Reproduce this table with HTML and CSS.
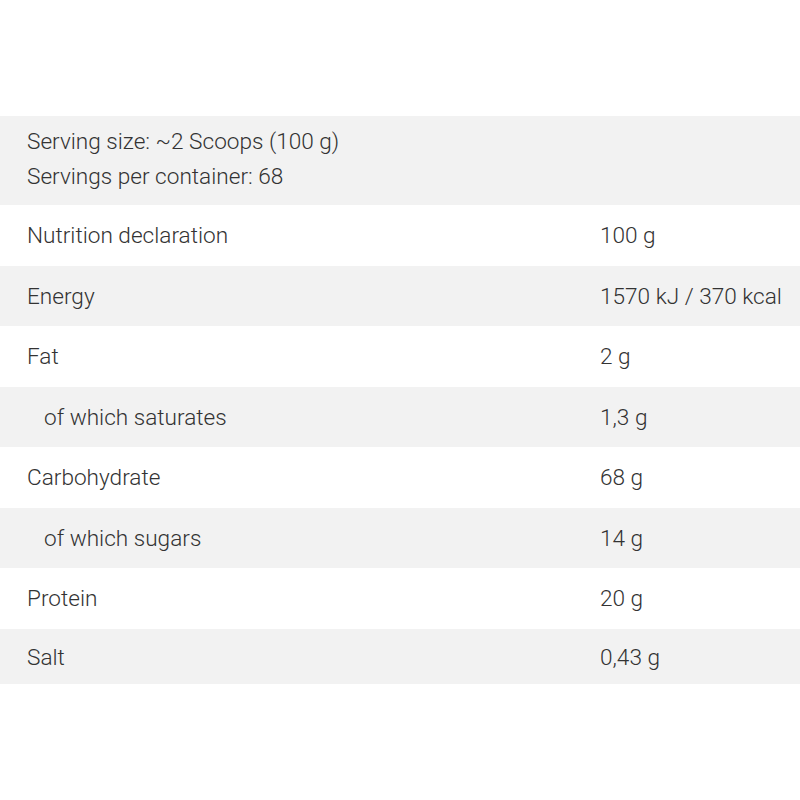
FILE: index.html
```html
<!DOCTYPE html>
<html>
<head>
<meta charset="utf-8">
<link rel="stylesheet" href="styles.css">
</head>
<body>
<div class="table">
  <div class="head">
    <div class="line">Serving size: ~2 Scoops (100 g)</div>
    <div class="line">Servings per container: 68</div>
  </div>
  <div class="row"><div class="name">Nutrition declaration</div><div class="val">100 g</div></div>
  <div class="row alt"><div class="name">Energy</div><div class="val">1570 kJ / 370 kcal</div></div>
  <div class="row"><div class="name">Fat</div><div class="val">2 g</div></div>
  <div class="row alt"><div class="name sub">of which saturates</div><div class="val">1,3 g</div></div>
  <div class="row"><div class="name">Carbohydrate</div><div class="val">68 g</div></div>
  <div class="row alt"><div class="name sub">of which sugars</div><div class="val">14 g</div></div>
  <div class="row"><div class="name">Protein</div><div class="val">20 g</div></div>
  <div class="row alt last"><div class="name">Salt</div><div class="val">0,43 g</div></div>
</div>
</body>
</html>
```
FILE: styles.css
```css
html, body {
  margin: 0;
  padding: 0;
  background: #ffffff;
}
body {
  font-family: Roboto, "Liberation Sans", sans-serif;
  font-size: 22.6px;
  font-weight: 300;
  color: #333333;
}
.table {
  margin-top: 116px;
  display: flex;
  flex-direction: column;
}
.head {
  background: #f2f2f2;
  padding: 8px 27px 11px;
  height: 89px;
  box-sizing: border-box;
}
.line {
  line-height: 35px;
}
.row {
  display: grid;
  grid-template-columns: 573px 1fr;
  height: 60.5px;
  align-items: center;
  padding-left: 27px;
  padding-top: 2px;
  box-sizing: border-box;
}
.row .name,
.row .val {
  line-height: 30px;
}
.alt {
  background: #f2f2f2;
}
.last {
  height: 55px;
  padding-top: 4px;
}
.sub {
  padding-left: 17px;
}
```
